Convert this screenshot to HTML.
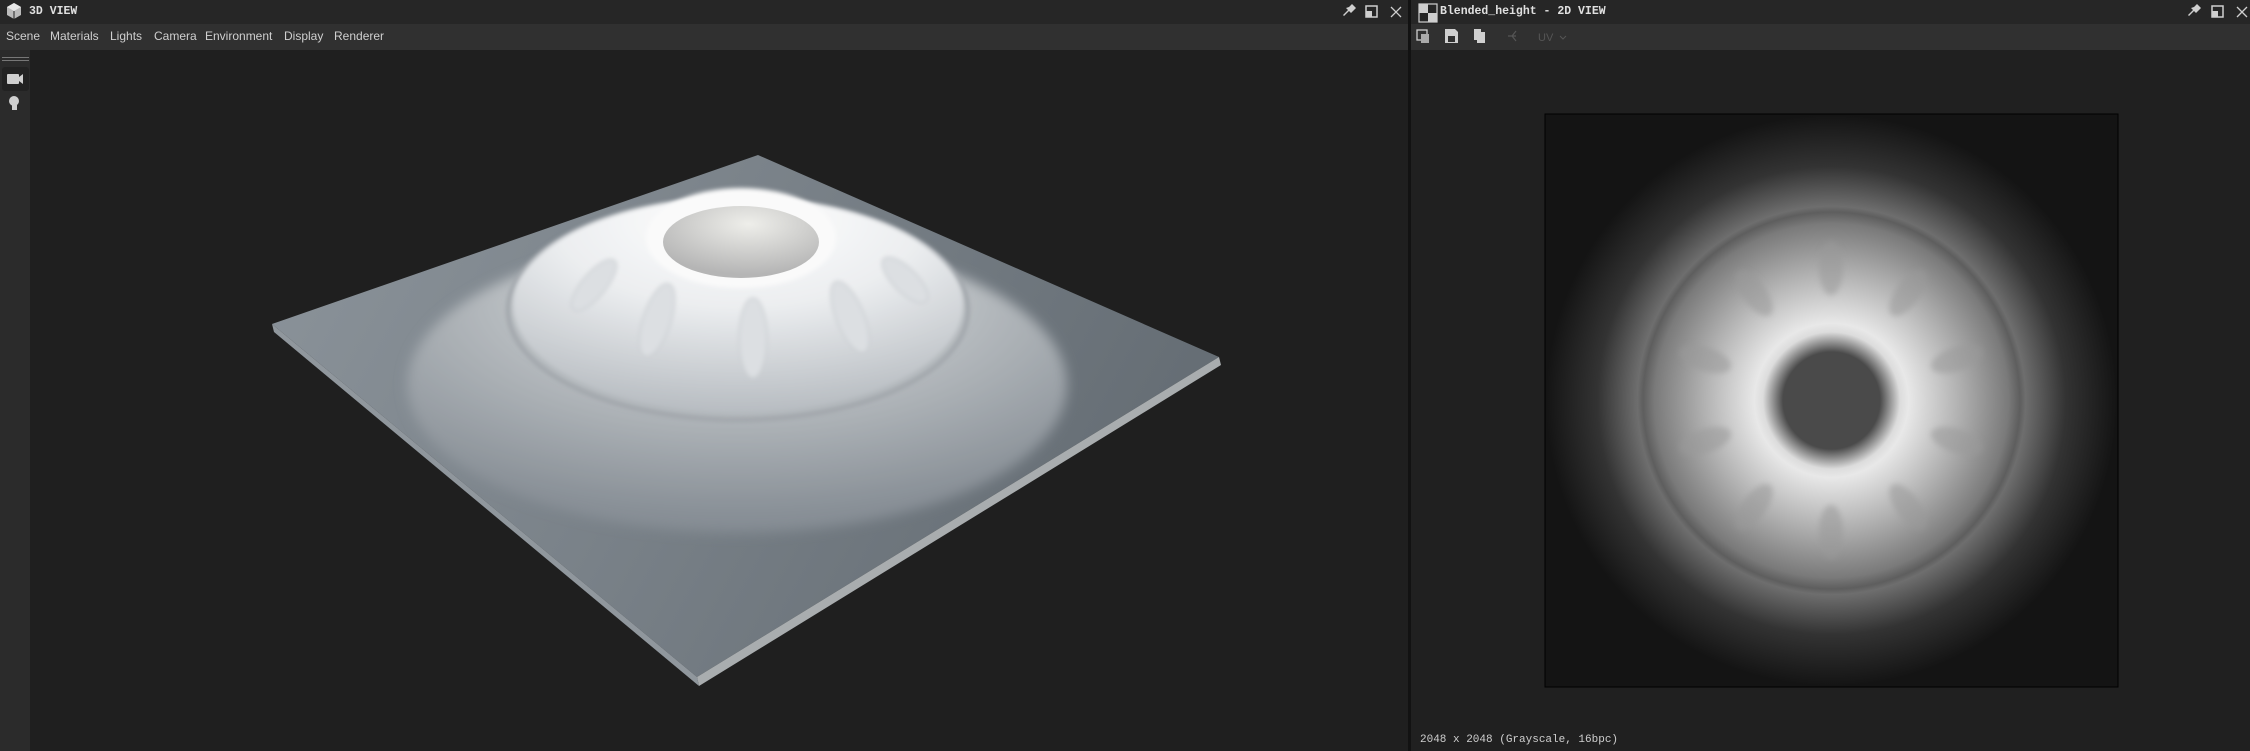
<!DOCTYPE html>
<html><head><meta charset="utf-8"><style>
*{margin:0;padding:0;box-sizing:border-box}
body{width:2250px;height:751px;background:#1f1f1f;position:relative;overflow:hidden;font-family:"Liberation Sans",sans-serif;color:#c8c8c8}
.abs{position:absolute}
.hdr{top:0;height:24px;background:#262626}
.menu{top:24px;height:26px;background:#303030}
.title{font-family:"Liberation Mono","DejaVu Sans Mono",monospace;font-weight:bold;font-size:11.5px;color:#e0e0e0;top:5px}
</style></head><body>
<div class="abs hdr" style="left:0;width:1408px"></div>
<div class="abs menu" style="left:0;width:1408px"></div>
<div class="abs" style="left:0;top:50px;width:30px;height:701px;background:#2b2b2b"></div>
<div class="abs" style="left:2px;top:57px;width:27px;height:1px;background:#777"></div>
<div class="abs" style="left:2px;top:60px;width:27px;height:1px;background:#777"></div>
<div class="abs" style="left:2px;top:67px;width:27px;height:24px;background:#222;border-radius:3px"></div>
<svg class="abs" style="left:0;top:0" width="1408" height="751">
 <g fill="#cfcfcf">
  <path d="M14 3 L21 7 L21 15 L14 19 L7 15 L7 7Z" fill="#bbb"/><path d="M14 11 L21 7 L14 3 L7 7Z" fill="#e8e8e8"/><path d="M14 11 L14 19" stroke="#262626" stroke-width="1"/>
  <rect x="7" y="74" width="12" height="10" rx="1"/><path d="M19 77 L23 74 L23 84 L19 81Z"/>
  <circle cx="14" cy="101" r="5"/><rect x="12" y="105" width="5" height="5"/>
  <path d="M1349 7 l4 4 l-2 2 l-2 -2 l-5 5 l-1 -1 l5 -5 l-2 -2z M1349 7 l3 -3 l4 4 l-3 3z"/>
  <rect x="1366" y="6" width="11" height="11" fill="none" stroke="#cfcfcf" stroke-width="1.5"/><rect x="1366" y="11" width="6" height="6"/>
  <path d="M1391 7 L1401 17 M1401 7 L1391 17" stroke="#cfcfcf" stroke-width="1.3"/>
 </g>
 <defs>
  <linearGradient id="pl" x1="0" y1="0" x2="1" y2="0.3"><stop offset="0" stop-color="#8c949b"/><stop offset="0.5" stop-color="#7a8289"/><stop offset="1" stop-color="#666e75"/></linearGradient>
  <radialGradient id="od" cx="0.5" cy="0.2" r="0.85"><stop offset="0" stop-color="#e8eaec"/><stop offset="0.45" stop-color="#b3b8bc"/><stop offset="0.85" stop-color="#8a9198"/><stop offset="1" stop-color="#7f878e"/></radialGradient>
  <radialGradient id="id" cx="0.5" cy="0.1" r="0.9"><stop offset="0" stop-color="#ffffff"/><stop offset="0.45" stop-color="#eceef0"/><stop offset="1" stop-color="#b7bcc1"/></radialGradient>
  <radialGradient id="hl" cx="0.55" cy="0.25" r="0.7"><stop offset="0" stop-color="#eeeeea"/><stop offset="1" stop-color="#b5b5b5"/></radialGradient>
  <filter id="b6" x="-20%" y="-20%" width="140%" height="140%"><feGaussianBlur stdDeviation="6"/></filter>
  <filter id="b2" x="-20%" y="-20%" width="140%" height="140%"><feGaussianBlur stdDeviation="2"/></filter>
 </defs>
 <polygon points="758,155 272,324 697,677 1219,357" fill="url(#pl)"/>
 <polygon points="697,677 1219,357 1221,365 699,686" fill="#a9adaf"/>
 <polygon points="272,324 697,677 699,686 274,332" fill="#90979d"/>
 <ellipse cx="737" cy="385" rx="330" ry="148" fill="url(#od)" filter="url(#b6)"/>
 <ellipse cx="738" cy="310" rx="230" ry="110" fill="none" stroke="#a0a5aa" stroke-width="4" filter="url(#b2)"/>
 <ellipse cx="738" cy="305" rx="225" ry="108" fill="url(#id)" filter="url(#b2)"/>
 <g fill="#dcdfe2" stroke="#c2c6ca" stroke-width="1" filter="url(#b2)">
  <ellipse cx="753" cy="338" rx="14" ry="40"/>
  <ellipse cx="657" cy="320" rx="14" ry="38" transform="rotate(18 657 320)"/>
  <ellipse cx="594" cy="285" rx="12" ry="32" transform="rotate(40 594 285)"/>
  <ellipse cx="850" cy="317" rx="14" ry="38" transform="rotate(-22 850 317)"/>
  <ellipse cx="905" cy="280" rx="12" ry="30" transform="rotate(-45 905 280)"/>
 </g>
 <ellipse cx="741" cy="238" rx="95" ry="50" fill="#fafafa" filter="url(#b2)"/>
 <ellipse cx="741" cy="242" rx="78" ry="36" fill="url(#hl)"/>
 <g font-size="12" fill="#cfcfcf" font-family="Liberation Sans">
 <text x="6" y="40">Scene</text>
 <text x="50" y="40">Materials</text>
 <text x="110" y="40">Lights</text>
 <text x="154" y="40">Camera</text>
 <text x="205" y="40">Environment</text>
 <text x="284" y="40">Display</text>
 <text x="334" y="40">Renderer</text>
 </g>
</svg>
<div class="abs title" style="left:29px">3D VIEW</div>
<div class="abs" style="left:1408px;top:0;width:3px;height:751px;background:#121212"></div>
<div class="abs hdr" style="left:1411px;width:839px"></div>
<div class="abs menu" style="left:1411px;width:839px"></div>
<div class="abs" style="left:1411px;top:50px;width:839px;height:701px;background:#202020"></div>
<div class="abs title" style="left:1440px">Blended_height - 2D VIEW</div>
<svg class="abs" style="left:1411px;top:0" width="839" height="751">
 <defs>
  <radialGradient id="hm" cx="0.5" cy="0.5" r="0.5">
   <stop offset="0" stop-color="#4a4a4a"/><stop offset="0.17" stop-color="#4a4a4a"/><stop offset="0.24" stop-color="#dcdcdc"/><stop offset="0.27" stop-color="#e8e8e8"/><stop offset="0.45" stop-color="#b0b0b0"/><stop offset="0.62" stop-color="#7a7a7a"/><stop offset="0.66" stop-color="#5e5e5e"/><stop offset="0.68" stop-color="#6e6e6e"/><stop offset="0.82" stop-color="#333"/><stop offset="1" stop-color="#141414"/>
  </radialGradient>
  <filter id="bl"><feGaussianBlur stdDeviation="3"/></filter>
 </defs>
 <g fill="#cfcfcf">
  <rect x="8" y="4" width="9" height="9"/><rect x="17" y="13" width="9" height="9"/><rect x="8" y="4" width="18" height="18" fill="none" stroke="#cfcfcf" stroke-width="1.2"/>
  <rect x="6" y="30" width="10" height="10" fill="none" stroke="#cfcfcf" stroke-width="1.3"/><rect x="10" y="34" width="8" height="9" fill="#aaa"/>
  <path d="M34 29 h10 l3 3 v11 h-13z"/><rect x="37" y="36" width="7" height="6" fill="#303030"/>
  <rect x="63" y="29" width="7" height="11"/><rect x="66" y="32" width="8" height="11"/>
  <path d="M97 36 h4 l4 -5 M101 36 l4 5 M101 36 h4" stroke="#555" stroke-width="1.2" fill="none"/>
  <text x="127" y="41" font-size="11" fill="#555" font-family="Liberation Sans">UV</text>
  <path d="M149 36 l3 3 l3 -3" stroke="#555" fill="none"/>
 </g>
 <g fill="#cfcfcf">
  <path d="M783 7 l4 4 l-2 2 l-2 -2 l-5 5 l-1 -1 l5 -5 l-2 -2z M783 7 l3 -3 l4 4 l-3 3z"/>
  <rect x="801" y="6" width="11" height="11" fill="none" stroke="#cfcfcf" stroke-width="1.5"/><rect x="801" y="11" width="6" height="6"/>
  <path d="M826 7 L836 17 M836 7 L826 17" stroke="#cfcfcf" stroke-width="1.3"/>
 </g>
 <rect x="134" y="114" width="573" height="573" fill="#141414" stroke="#000" stroke-width="1"/>
 <rect x="135" y="115" width="571" height="571" fill="url(#hm)"/>
 <g fill="#9a9a9a" opacity=".55" filter="url(#bl)">
  <ellipse cx="420" cy="268" rx="12" ry="27"/>
  <ellipse cx="420" cy="532" rx="12" ry="27"/>
  <ellipse cx="497" cy="293" rx="12" ry="27" transform="rotate(36 497 293)"/>
  <ellipse cx="343" cy="293" rx="12" ry="27" transform="rotate(-36 343 293)"/>
  <ellipse cx="546" cy="359" rx="12" ry="27" transform="rotate(72 546 359)"/>
  <ellipse cx="294" cy="359" rx="12" ry="27" transform="rotate(-72 294 359)"/>
  <ellipse cx="546" cy="441" rx="12" ry="27" transform="rotate(-72 546 441)"/>
  <ellipse cx="294" cy="441" rx="12" ry="27" transform="rotate(72 294 441)"/>
  <ellipse cx="497" cy="507" rx="12" ry="27" transform="rotate(-36 497 507)"/>
  <ellipse cx="343" cy="507" rx="12" ry="27" transform="rotate(36 343 507)"/>
 </g>
 <text x="9" y="742" font-size="11" fill="#cfcfcf" font-family="Liberation Mono, monospace">2048 x 2048 (Grayscale, 16bpc)</text>
</svg>
</body></html>
